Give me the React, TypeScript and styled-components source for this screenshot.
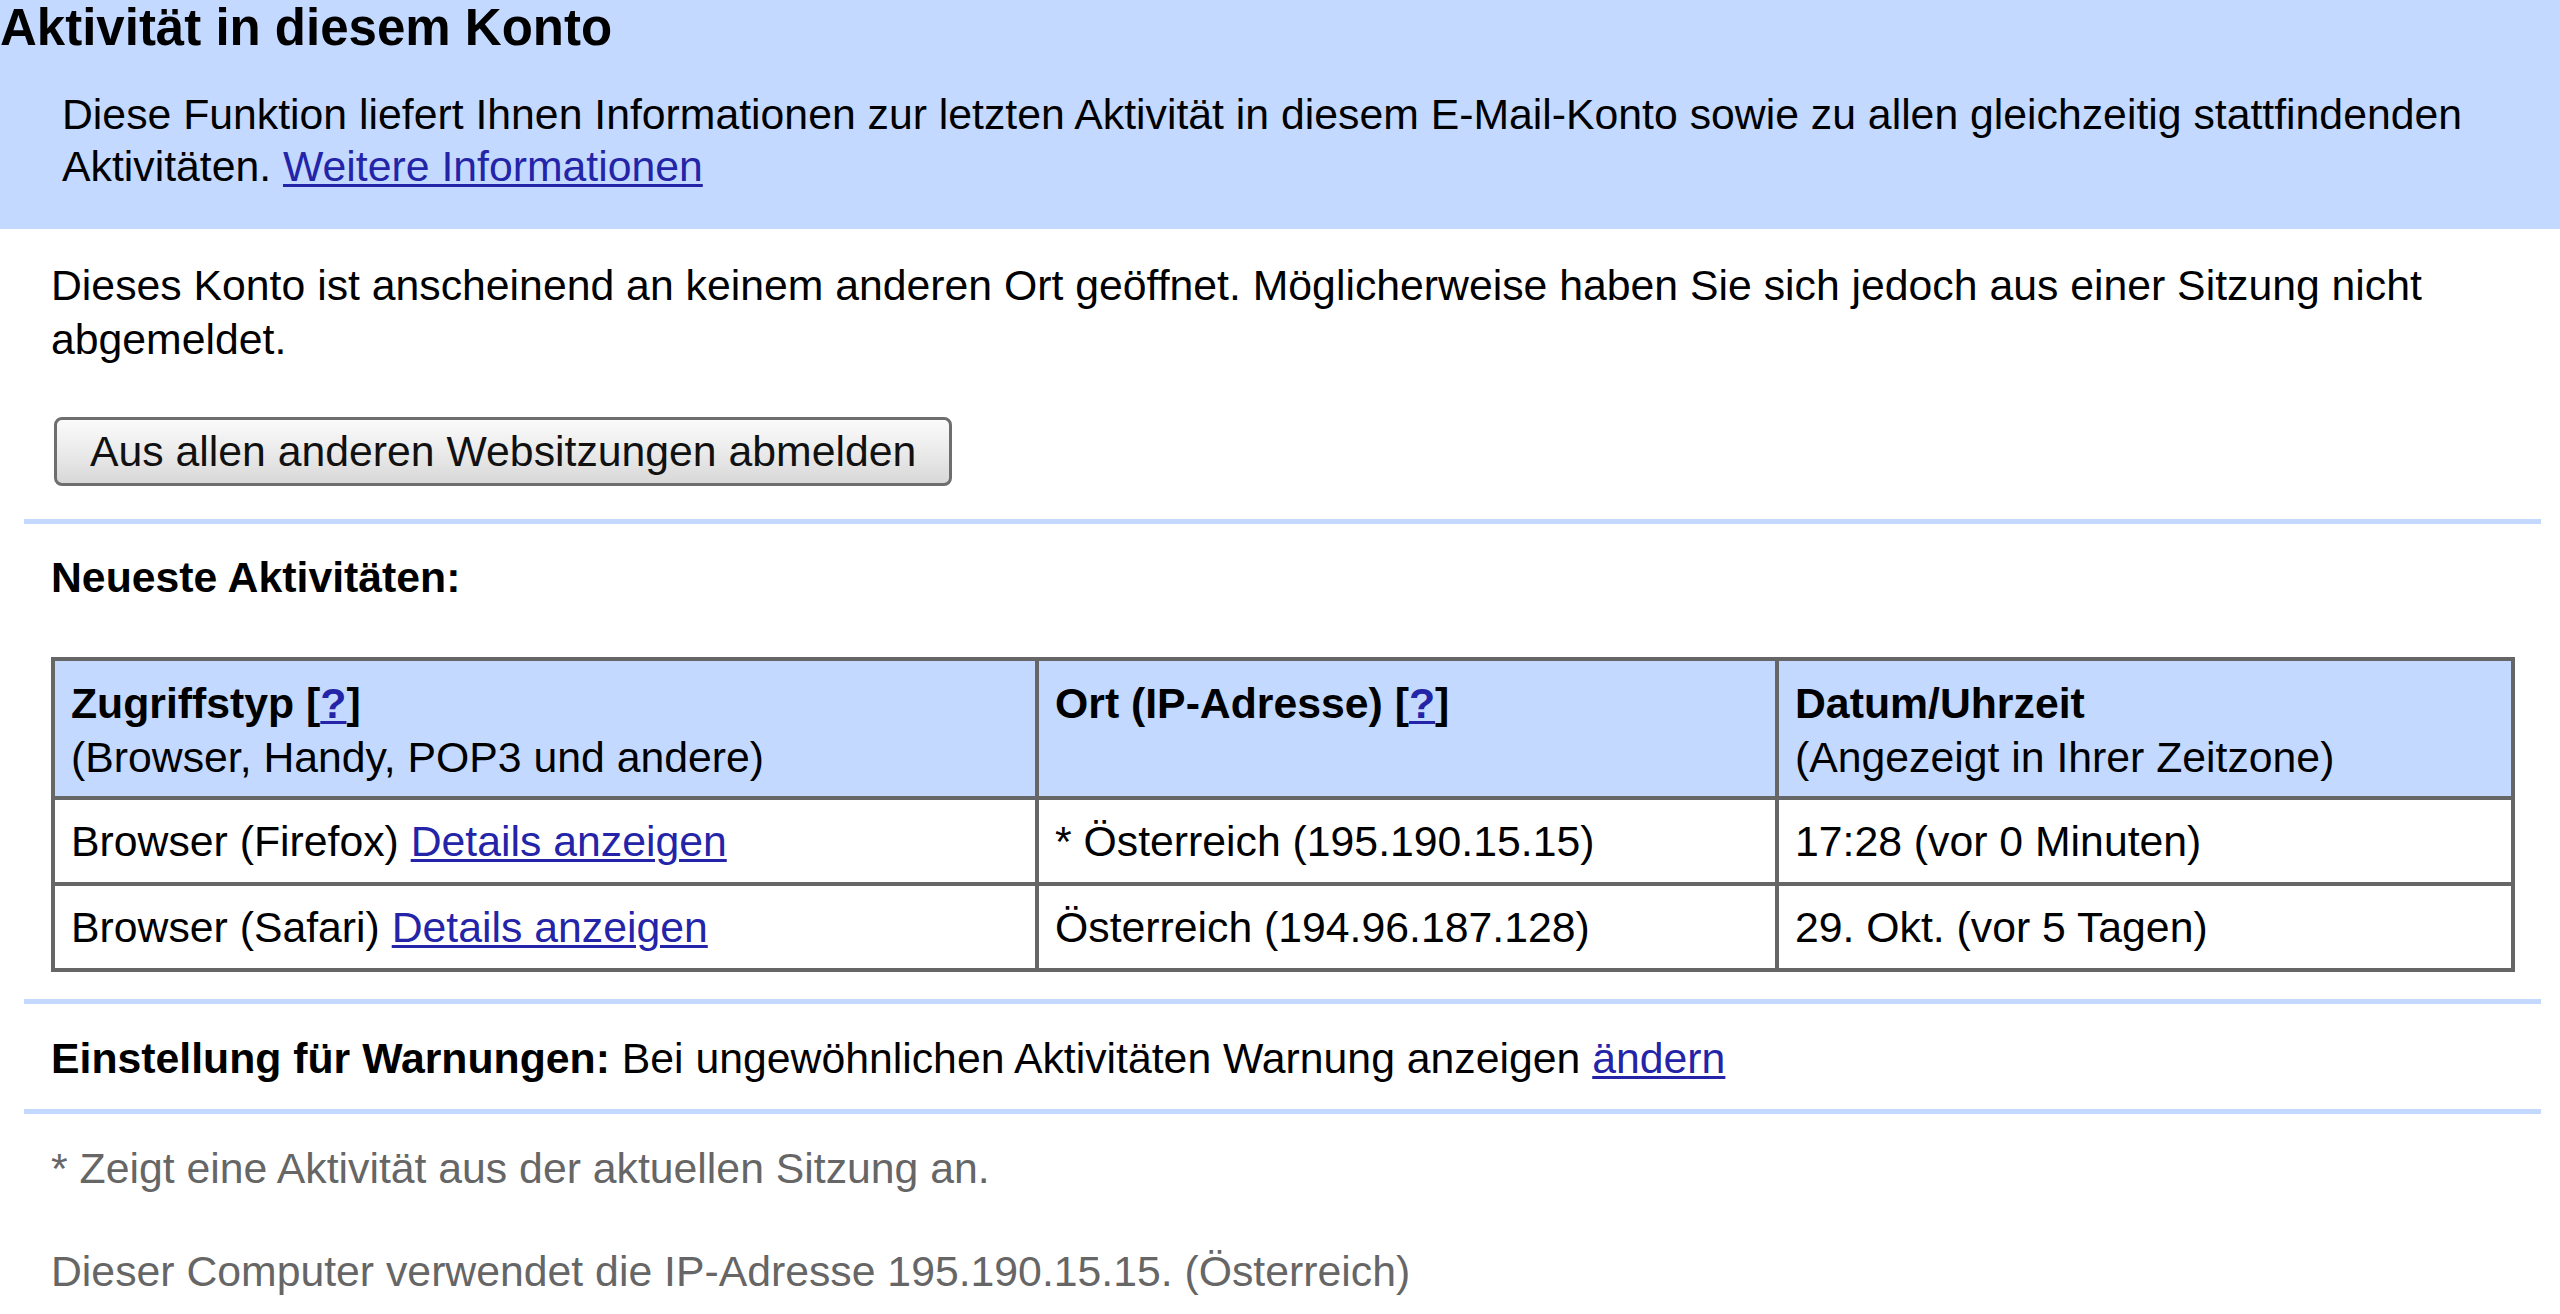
import React from 'react';
import styled, { createGlobalStyle } from 'styled-components';

const GlobalStyle = createGlobalStyle`
  html, body {
    margin: 0;
    padding: 0;
    background: #ffffff;
  }
  body {
    font-family: "Liberation Sans", Arial, sans-serif;
    color: #000;
  }
`;

type Activity = {
  access: string;
  location: string;
  time: string;
};

const activities: Activity[] = [
  { access: 'Browser (Firefox)', location: '* Österreich (195.190.15.15)', time: '17:28 (vor 0 Minuten)' },
  { access: 'Browser (Safari)', location: 'Österreich (194.96.187.128)', time: '29. Okt. (vor 5 Tagen)' },
];

const App = () => {
  return (
    <>
      <GlobalStyle />
      <Page>
        <Header>
          <Title>Aktivität in diesem Konto</Title>
          <Intro>
            Diese Funktion liefert Ihnen Informationen zur letzten Aktivität in diesem E-Mail-Konto sowie zu allen
            gleichzeitig stattfindenden Aktivitäten. <Link href="#">Weitere Informationen</Link>
          </Intro>
        </Header>

        <Content>
          <Section>
            <Text>
              Dieses Konto ist anscheinend an keinem anderen Ort geöffnet. Möglicherweise haben Sie sich jedoch aus
              einer Sitzung nicht abgemeldet.
            </Text>
            <SignOutButton type="button">Aus allen anderen Websitzungen abmelden</SignOutButton>
          </Section>

          <Divider />

          <Section>
            <Heading>Neueste Aktivitäten:</Heading>
            <Table>
              <colgroup>
                <col style={{ width: 984 }} />
                <col style={{ width: 740 }} />
                <col style={{ width: 736 }} />
              </colgroup>
              <thead>
                <tr>
                  <HeadCell>
                    <strong>
                      Zugriffstyp [<Link href="#">?</Link>]
                    </strong>
                    <br />
                    (Browser, Handy, POP3 und andere)
                  </HeadCell>
                  <HeadCell>
                    <strong>
                      Ort (IP-Adresse) [<Link href="#">?</Link>]
                    </strong>
                  </HeadCell>
                  <HeadCell>
                    <strong>Datum/Uhrzeit</strong>
                    <br />
                    (Angezeigt in Ihrer Zeitzone)
                  </HeadCell>
                </tr>
              </thead>
              <tbody>
                {activities.map((row) => (
                  <tr key={row.location}>
                    <Cell>
                      {row.access} <Link href="#">Details anzeigen</Link>
                    </Cell>
                    <Cell>{row.location}</Cell>
                    <Cell>{row.time}</Cell>
                  </tr>
                ))}
              </tbody>
            </Table>
          </Section>

          <Divider />

          <Section $tight>
            <Text>
              <strong>Einstellung für Warnungen:</strong> Bei ungewöhnlichen Aktivitäten Warnung anzeigen{' '}
              <Link href="#">ändern</Link>
            </Text>
          </Section>

          <Divider />

          <Footer>
            <Note>* Zeigt eine Aktivität aus der aktuellen Sitzung an.</Note>
            <Note>Dieser Computer verwendet die IP-Adresse 195.190.15.15. (Österreich)</Note>
          </Footer>
        </Content>
      </Page>
    </>
  );
};

const Page = styled.div`
  width: 2560px;
  min-height: 1314px;
  overflow: hidden;
  font-size: 42.75px;
  line-height: 54px;
`;

const Header = styled.div`
  background: #c3d9ff;
  height: 229px;
  box-sizing: border-box;
  padding-top: 0;
`;

const Title = styled.h1`
  margin: 0;
  font-size: 51px;
  line-height: 56px;
  font-weight: bold;
  color: #000;
`;

const Intro = styled.p`
  margin: 32px 40px 0 62px;
  line-height: 52px;
`;

const Link = styled.a`
  color: #2424a8;
  text-decoration: underline;
  text-decoration-thickness: 3px;
  text-underline-offset: 3px;
`;

const Content = styled.div`
  padding: 0 19px 0 24px;
`;

const Section = styled.div<{ $tight?: boolean }>`
  padding: ${({ $tight }) => ($tight ? '27px 0 24px 27px' : '29px 0 33px 27px')};
`;

const Text = styled.p`
  margin: 0;
  padding-right: 40px;
`;

const SignOutButton = styled.button`
  display: block;
  margin: 51px 0 0 3px;
  height: 69px;
  padding: 0 33px;
  border: 3px solid #6e6e6e;
  border-radius: 8px;
  background: linear-gradient(#fbfbfb, #e9e9e9 55%, #d8d8d8);
  font-family: "Liberation Sans", Arial, sans-serif;
  font-size: 42.75px;
  color: #111;
  cursor: pointer;
`;

const Divider = styled.hr`
  margin: 0;
  height: 5px;
  border: none;
  background: #c3d9ff;
`;

const Heading = styled.h2`
  margin: -3px 0 53px;
  font-size: 42.75px;
  line-height: 54px;
  font-weight: bold;
`;

const Table = styled.table`
  width: 2460px;
  table-layout: fixed;
  border-collapse: collapse;
  border: 4px solid #5c5c5c;
  margin-bottom: -6px;
`;

const HeadCell = styled.th`
  background: #c3d9ff;
  border: 4px solid #666;
  height: 128px;
  box-sizing: border-box;
  padding: 15px 16px 12px;
  text-align: left;
  vertical-align: top;
  font-weight: normal;
`;

const Cell = styled.td`
  border: 4px solid #666;
  height: 86px;
  box-sizing: border-box;
  padding: 0 16px;
  vertical-align: middle;
`;

const Footer = styled.div`
  padding: 27px 0 0 27px;
  color: #666;
`;

const Note = styled.p`
  margin: 0 0 49px;
`;

export default App;
